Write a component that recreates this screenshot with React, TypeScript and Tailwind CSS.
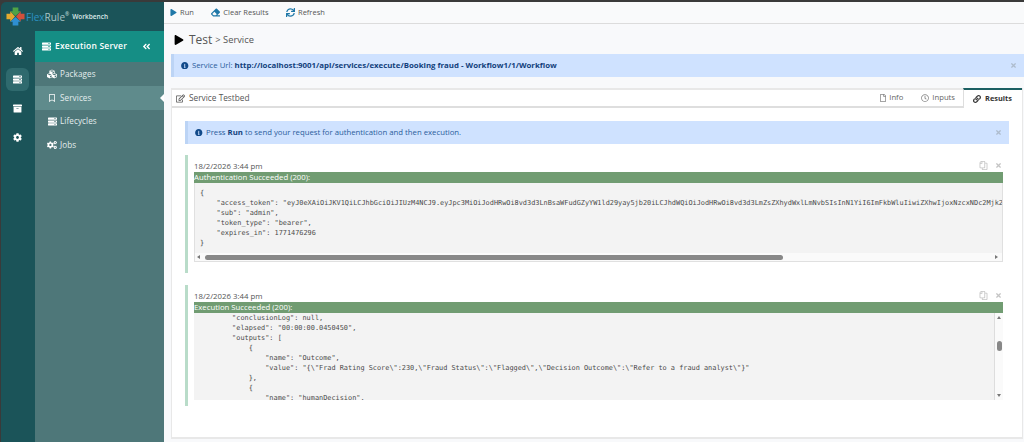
import React from 'react';
import {
  FaHome, FaServer, FaArchive, FaCog, FaCogs, FaCubes, FaRegBookmark, FaAngleDoubleLeft, FaPlay, FaEraser, FaSync,
  FaInfoCircle, FaRegEdit, FaRegFile, FaRegClock, FaLink, FaRegCopy, FaTimes,
} from 'react-icons/fa';

const NavIcon = ({ active, children }: { active?: boolean; children: React.ReactNode }) => (
  <div className={`flex h-[23px] w-[23px] items-center justify-center rounded-md text-white ${active ? 'bg-[#2f6a6e]' : ''}`}>
    {children}
  </div>
);

const MenuItem = ({ icon, label, active }: { icon: React.ReactNode; label: string; active?: boolean }) => (
  <div className={`relative flex h-[23.5px] items-center gap-[3px] pl-[12px] text-[8.1px] tracking-[0.1px] text-[#e4eeee] ${active ? 'bg-[#5f8b8c]' : ''}`}>
    <span className="flex w-[10px] justify-center">{icon}</span>
    {label}
    {active && <span className="absolute right-0 top-[8px] h-0 w-0 border-y-[4px] border-r-[4px] border-y-transparent border-r-white" />}
  </div>
);

const Alert = ({ children }: { children: React.ReactNode }) => (
  <div className="flex h-[23px] items-center border-l-[3px] border-[#bcd4f5] bg-[#cfe2ff] pl-[7px] pr-[7px] text-[7.75px] text-[#2a5d9c]">
    <FaInfoCircle size={7.5} className="mr-[3.5px] text-[#124a8a]" />
    <span className="flex-1">{children}</span>
    <FaTimes size={7} className="text-[#aebccd]" />
  </div>
);

const ResultHead = ({ title }: { title: string }) => (
  <>
    <div className="flex h-[11px] items-center justify-between text-[7.8px] text-[#555]">
      <span>18/2/2026 3:44 pm</span>
      <span className="-mt-[3px] mr-[1px] flex items-center gap-[7px] text-[#c4c4c4]">
        <FaRegCopy size={9} className="-scale-x-100" />
        <FaTimes size={7} />
      </span>
    </div>
    <div className="flex h-[11px] items-center bg-[#719c72] text-[7.75px] text-white">{title}</div>
  </>
);

const mono = "whitespace-pre font-['DejaVu_Sans_Mono','Liberation_Mono',monospace] text-[6.88px] leading-[10px] text-[#4a4a4a]";

export default function App() {
  return (
    <div className="flex h-[442px] w-[1024px] flex-col overflow-hidden bg-[#3a3a3a] pl-[1px] pt-[2px] font-['Open_Sans','Noto_Sans',sans-serif]">
      <div className="flex min-h-0 flex-1">
        <aside className="flex w-[163px] shrink-0 flex-col overflow-hidden rounded-tl-[5px] bg-[#1b5459]">
          <div className="flex h-[29px] shrink-0 items-center pl-[5px]">
            <svg width="19" height="19" viewBox="0 0 20 20">
              <path d="M7 0.5h6v4h2.5L10 9.5 4.5 4.5H7z" fill="#4fa346" />
              <path d="M0.5 7v6h4v2.5L9.5 10 4.5 4.5V7z" fill="#e3a92f" />
              <path d="M19.5 7v6h-4v2.5L10.5 10l5-5.5V7z" fill="#d2503c" />
              <path d="M7 19.5h6v-4h2.5L10 10.5l-5.5 5H7z" fill="#2f8fd0" />
            </svg>
            <span className="ml-[1px] text-[10px] leading-none"><span className="text-[#2c92c4]">Flex</span><span className="text-[#a9c4c6]">Rule</span></span>
            <sup className="text-[5px] text-[#cfe0e0]">®</sup>
            <span className="ml-[3px] text-[6.5px] font-semibold text-[#dbe8e8]">Workbench</span>
          </div>
          <div className="flex min-h-0 flex-1">
            <nav className="flex w-[34px] shrink-0 flex-col items-center gap-[6px] pr-[1px] pt-[8px]">
              <NavIcon><FaHome size={10} /></NavIcon>
              <NavIcon active><FaServer size={9} /></NavIcon>
              <NavIcon><FaArchive size={9} /></NavIcon>
              <NavIcon><FaCog size={9} /></NavIcon>
            </nav>
            <div className="flex-1 bg-[#4e7779]">
              <div className="flex h-[31px] items-center bg-[#158e85] pl-[7px] pr-[13px] text-[8.5px] font-semibold tracking-[0.2px] text-white">
                <FaServer size={9} className="mr-[4px]" />
                <span className="flex-1">Execution Server</span>
                <FaAngleDoubleLeft size={9} />
              </div>
              <div className="pt-[0.5px]">
                <MenuItem icon={<FaCubes size={10} className="text-white" />} label="Packages" />
                <MenuItem active icon={<FaRegBookmark size={8} className="text-white" />} label="Services" />
                <MenuItem icon={<FaServer size={9} className="text-white" />} label="Lifecycles" />
                <MenuItem icon={<FaCogs size={10} className="text-white" />} label="Jobs" />
              </div>
            </div>
          </div>
        </aside>

        <main className="flex min-w-0 flex-1 flex-col bg-[#f8f9fb]">
          <div className="flex h-[22px] shrink-0 items-center gap-[17.5px] border-b border-[#dcdcdc] bg-[#f9fafb] pl-[6px] text-[7.5px] text-[#555]">
            <span className="flex items-center gap-[3px]"><FaPlay size={7} className="text-[#1f78a8]" />Run</span>
            <span className="flex items-center gap-[3px]"><FaEraser size={9} className="text-[#1f78a8]" />Clear Results</span>
            <span className="flex items-center gap-[3px]"><FaSync size={9} className="text-[#1f78a8]" />Refresh</span>
          </div>
          <div className="flex h-[30px] shrink-0 items-center pl-[10px] pt-[1px] text-[#555]">
            <FaPlay size={10} className="mr-[5px] text-black" />
            <span className="text-[12px]">Test</span>
            <span className="ml-[3px] text-[9.3px]">&gt; Service</span>
          </div>
          <div className="ml-[7px] shrink-0">
            <Alert>
              Service Url: <b className="text-[7.85px] font-bold text-[#123f7c]">http://localhost:9001/api/services/execute/Booking fraud - Workflow1/1/Workflow</b>
            </Alert>
          </div>
          <section className="mb-[3px] ml-[7px] mr-[1px] mt-[11px] flex min-h-0 flex-1 flex-col border-x border-b-2 border-t-2 border-[#e8e8e8] bg-white">
            <div className="flex h-[18px] shrink-0 items-center justify-between border-b-2 border-[#dedede] bg-white">
              <span className="flex items-center gap-[4px] pl-[4px] text-[8.3px] text-[#555]">
                <FaRegEdit size={9} />Service Testbed
              </span>
              <div className="flex h-full items-center text-[7.7px] text-[#666]">
                <span className="flex items-center gap-[2px] pr-[18px]"><FaRegFile size={8} className="text-[#888]" />Info</span>
                <span className="flex items-center gap-[3px] pr-[8px]"><FaRegClock size={8} className="text-[#888]" />Inputs</span>
                <span className="-mt-[1px] flex h-[20px] w-[59px] items-center gap-[4px] border-l border-t-2 border-l-[#dedede] border-t-[#1b5f62] bg-white pl-[9px] text-[7.4px] font-bold text-[#333]">
                  <FaLink size={8} />Results
                </span>
              </div>
            </div>
            <div className="min-h-0 flex-1 pl-[13px] pr-[13px] pt-[13px]">
              <Alert>
                Press <b className="font-bold text-[#123f7c]">Run</b> to send your request for authentication and then execution.
              </Alert>
              <div className="mt-[11px] border-l-[3px] border-[#b9dcc9] pb-[11px] pl-[6px] pr-[6px] pt-[6px]">
                <ResultHead title="Authentication Succeeded (200):" />
                <div className="border-x border-b border-[#e0e0e0]">
                  <pre className={`h-[70px] overflow-hidden bg-[#f3f3f3] pl-[5px] pt-[5px] ${mono}`}>{`{
    "access_token": "eyJ0eXAiOiJKV1QiLCJhbGciOiJIUzM4NCJ9.eyJpc3MiOiJodHRwOi8vd3d3LnBsaWFudGZyYW1ld29yay5jb20iLCJhdWQiOiJodHRwOi8vd3d3LmZsZXhydWxlLmNvbSIsInN1YiI6ImFkbWluIiwiZXhwIjoxNzcxNDc2Mjk2
    "sub": "admin",
    "token_type": "bearer",
    "expires_in": 1771476296
}`}</pre>
                  <div className="flex h-[8px] items-center bg-[#fafafa] pl-[2px] pr-[4px]">
                    <span className="h-0 w-0 border-y-[2px] border-r-[3px] border-y-transparent border-r-[#777]" />
                    <span className="ml-[5px] h-[5px] w-[578px] rounded-full bg-[#888]" />
                    <span className="flex-1" />
                    <span className="h-0 w-0 border-y-[2px] border-l-[3px] border-y-transparent border-l-[#777]" />
                  </div>
                </div>
              </div>
              <div className="mt-[12px] border-l-[3px] border-[#b9dcc9] pb-[6px] pl-[6px] pr-[6px] pt-[6px]">
                <ResultHead title="Execution Succeeded (200):" />
                <div className="flex h-[87px] bg-[#f3f3f3]">
                  <pre className={`flex-1 overflow-hidden pl-[5px] ${mono}`}>{`        "conclusionLog": null,
        "elapsed": "00:00:00.0450450",
        "outputs": [
            {
                "name": "Outcome",
                "value": "{\\"Frad Rating Score\\":230,\\"Fraud Status\\":\\"Flagged\\",\\"Decision Outcome\\":\\"Refer to a fraud analyst\\"}"
            },
            {
                "name": "humanDecision",`}</pre>
                  <div className="flex w-[9px] flex-col items-center border-l border-[#ddd] bg-[#fafafa] py-[3px]">
                    <span className="h-0 w-0 border-x-[2px] border-b-[3px] border-x-transparent border-b-[#777]" />
                    <span className="mt-[22px] h-[10px] w-[5px] rounded-full bg-[#888]" />
                    <span className="flex-1" />
                    <span className="h-0 w-0 border-x-[2px] border-t-[3px] border-x-transparent border-t-[#777]" />
                  </div>
                </div>
              </div>
            </div>
          </section>
        </main>
      </div>
    </div>
  );
}
